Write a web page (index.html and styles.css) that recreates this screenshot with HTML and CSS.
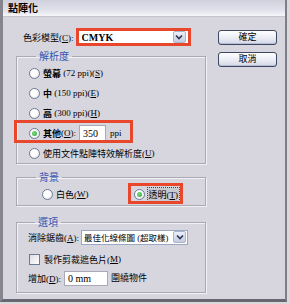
FILE: index.html
```html
<!DOCTYPE html>
<html lang="en">
<head>
    <meta charset="UTF-8">
    <title>點陣化</title>
    <link rel="stylesheet" href="styles.css">
</head>
<body>
    <div class="window">
        <div class="titlebar">點陣化</div>
        <div class="dialog-body">
            <div class="main">
                <div class="model-row">
                    <span class="label">色彩模型(<u>C</u>):</span>
                    <div class="select select-model">
                        <span class="select-value">CMYK</span>
                        <span class="drop">
                            <svg width="8" height="6" viewBox="0 0 8 6"><path d="M1 1.5 L4 4.5 L7 1.5" fill="none" stroke="#2a3552" stroke-width="1.6"/></svg>
                        </span>
                    </div>
                </div>

                <fieldset class="group group-res">
                    <legend>解析度</legend>
                    <div class="radio-row"><span class="radio"></span><span class="strong">螢幕</span>&nbsp;(72 ppi)(<u>S</u>)</div>
                    <div class="radio-row"><span class="radio"></span><span class="strong">中</span>&nbsp;(150 ppi)(<u>E</u>)</div>
                    <div class="radio-row"><span class="radio"></span><span class="strong">高</span>&nbsp;(300 ppi)(<u>H</u>)</div>
                    <div class="radio-row other-row">
                        <span class="radio checked"></span><span class="strong">其他</span>(<u>O</u>):
                        <span class="text-input ppi-input">350</span>
                        <span class="unit">ppi</span>
                        <span class="mark mark-other"></span>
                    </div>
                    <div class="radio-row"><span class="radio"></span>使用文件點陣特效解析度(<u>U</u>)</div>
                </fieldset>

                <fieldset class="group group-bg">
                    <legend>背景</legend>
                    <div class="bg-row">
                        <span class="option"><span class="radio"></span>白色(<u>W</u>)</span>
                        <span class="option option-clear">
                            <span class="radio checked"></span><span class="focus">透明(<u>T</u>)</span>
                            <span class="mark mark-clear"></span>
                        </span>
                    </div>
                </fieldset>

                <fieldset class="group group-opt">
                    <legend>選項</legend>
                    <div class="opt-row">
                        <span class="label">消除鋸齒(<u>A</u>):</span>
                        <div class="select select-aa">
                            <span class="select-value">最佳化線條圖 (超取樣)</span>
                            <span class="drop">
                                <svg width="8" height="6" viewBox="0 0 8 6"><path d="M1 1.5 L4 4.5 L7 1.5" fill="none" stroke="#2a3552" stroke-width="1.6"/></svg>
                            </span>
                        </div>
                    </div>
                    <div class="opt-row check-row"><span class="checkbox"></span>製作剪裁遮色片(<u>M</u>)</div>
                    <div class="opt-row">
                        <span class="label">增加(<u>D</u>):</span>
                        <span class="text-input add-input">0 mm</span>
                        <span class="unit">圍繞物件</span>
                    </div>
                </fieldset>
            </div>

            <div class="side">
                <button class="btn">確定</button>
                <button class="btn">取消</button>
            </div>
        </div>
    </div>
</body>
</html>
```

FILE: styles.css
```css
* {
    box-sizing: border-box;
}
body {
    margin: 0;
    background-color: #d9d9dd;
    font-family: "Liberation Serif", "Noto Sans CJK TC", serif;
    font-size: 9px;
    color: #000;
}
u {
    text-decoration: underline;
}
.window {
    width: 287px;
    height: 302px;
    background-color: #d7d6de;
    border-left: 3px solid #85858f;
    border-right: 2px solid #7e7e88;
    border-bottom: 3px solid #676772;
    display: flex;
    flex-direction: column;
}
.titlebar {
    height: 17px;
    line-height: 17px;
    padding-left: 5px;
    font-size: 10px;
    font-weight: bold;
    background: linear-gradient(#cfd0dc, #e2e2ec 65%, #f6f6fa);
    border-bottom: 1px solid #c4c4ce;
}
.dialog-body {
    display: flex;
    padding-top: 11px;
}
.main {
    width: 190px;
    margin-left: 13px;
}
.side {
    margin-left: 12px;
    padding-top: 2px;
    display: flex;
    flex-direction: column;
    gap: 7px;
}
.btn {
    width: 59px;
    height: 15px;
    padding: 0;
    font-family: inherit;
    font-size: 9px;
    line-height: 13px;
    color: #000;
    border: 1px solid #3b4763;
    border-radius: 3px;
    background: linear-gradient(#ffffff, #eceef6 50%, #d4d6e6);
    box-shadow: inset 0 -1px 0 #b8bcd4;
}

/* top row: colour model */
.model-row {
    display: flex;
    align-items: center;
    height: 18px;
    padding-left: 7px;
    gap: 2px;
}
.select {
    display: flex;
    align-items: center;
    background-color: #fff;
}
.select-model {
    width: 115px;
    height: 18px;
    border: 3px solid #e8472b;
    padding-left: 3px;
    padding-right: 2px;
    font-weight: bold;
    font-size: 10px;
}
.select-value {
    flex: 1;
    white-space: nowrap;
    overflow: hidden;
}
.drop {
    width: 13px;
    height: 12px;
    display: flex;
    align-items: center;
    justify-content: center;
    flex: none;
    border: 1px solid #aab4cc;
    border-radius: 2px;
    background: linear-gradient(#eef1fa, #c4cbe0);
}

/* group boxes */
.group {
    margin: 0;
    padding: 0 0 0 12px;
    border: 1px solid #a9a9b4;
    box-shadow: 1px 1px 0 #f2f2f6, inset 1px 1px 0 #f2f2f6;
    min-inline-size: 0;
}
.group legend {
    padding: 0 3px;
    margin-left: 7px;
    color: #3355b0;
    font-size: 10px;
    line-height: 13px;
}
.group-res {
    margin-top: 4px;
    padding-top: 0;
}
.group-bg {
    margin-top: 7px;
    padding-bottom: 1px;
}
.group-opt {
    margin-top: 10px;
    padding-left: 11px;
    padding-bottom: 5px;
}
.radio-row {
    position: relative;
    display: flex;
    align-items: center;
    height: 20px;
    white-space: nowrap;
}
.strong {
    font-weight: bold;
}
.radio {
    width: 11px;
    height: 11px;
    border-radius: 50%;
    border: 1px solid #6b7b96;
    background: radial-gradient(circle at 40% 40%, #ffffff 40%, #dadbe4);
    margin-right: 3px;
    display: flex;
    align-items: center;
    justify-content: center;
    flex: none;
}
.radio.checked::after {
    content: "";
    width: 5px;
    height: 5px;
    border-radius: 50%;
    background: radial-gradient(circle at 40% 40%, #7ee07f, #2a9a34);
}
.text-input {
    display: inline-flex;
    align-items: center;
    background-color: #fff;
    border: 1px solid #a9aab8;
    padding-left: 3px;
    font-size: 10px;
}
.ppi-input {
    width: 27px;
    height: 17px;
    margin-left: 3px;
}
.unit {
    margin-left: 4px;
}
.mark {
    position: absolute;
    border: 3px solid #e8472b;
    pointer-events: none;
}
.mark-other {
    left: -15px;
    top: -3px;
    width: 119px;
    height: 23px;
}

/* background group */
.bg-row {
    display: flex;
    align-items: center;
    height: 20px;
    padding-left: 13px;
    white-space: nowrap;
}
.option {
    position: relative;
    display: flex;
    align-items: center;
}
.option-clear {
    margin-left: 45px;
}
.focus {
    outline: 1px dotted #444;
    background-color: #c8c8d0;
    padding: 0 1px;
}
.mark-clear {
    left: -6px;
    top: -5px;
    width: 55px;
    height: 21px;
}

/* options group */
.opt-row {
    display: flex;
    align-items: center;
    white-space: nowrap;
}
.opt-row:first-of-type {
    height: 16px;
}
.select-aa {
    width: 107px;
    height: 15px;
    margin-left: 2px;
    border: 1px solid #9aa8c4;
    padding-left: 2px;
    padding-right: 1px;
    font-size: 8.5px;
}
.check-row {
    height: 20px;
    margin-top: 4px;
}
.checkbox {
    width: 11px;
    height: 11px;
    border: 1px solid #6b7b96;
    background: linear-gradient(135deg, #dcdce4, #ffffff);
    margin-left: 1px;
    margin-right: 4px;
}
.add-input {
    width: 44px;
    height: 15px;
    margin-left: 3px;
}
.add-input + .unit {
    margin-left: 3px;
    height: 18px;
    line-height: 18px;
}
```
